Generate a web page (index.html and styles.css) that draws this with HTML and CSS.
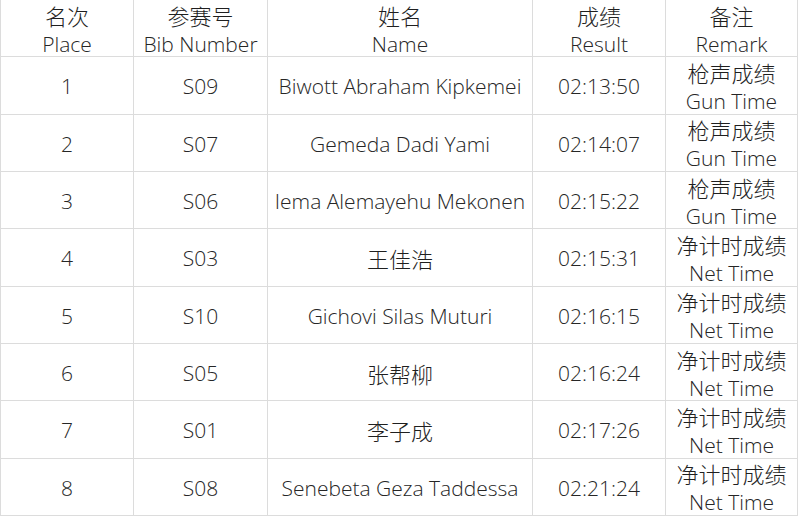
FILE: index.html
```html
<!DOCTYPE html>
<html lang="zh">
<head>
<meta charset="utf-8">
<title>成绩</title>
<link rel="stylesheet" href="styles.css">
</head>
<body>
<div class="results">
  <div class="cell"><span class="zh">名次</span><span>Place</span></div>
  <div class="cell"><span class="zh">参赛号</span><span>Bib Number</span></div>
  <div class="cell"><span class="zh">姓名</span><span>Name</span></div>
  <div class="cell"><span class="zh">成绩</span><span>Result</span></div>
  <div class="cell"><span class="zh">备注</span><span>Remark</span></div>

  <div class="cell">1</div>
  <div class="cell">S09</div>
  <div class="cell">Biwott Abraham Kipkemei</div>
  <div class="cell">02:13:50</div>
  <div class="cell"><span class="zh">枪声成绩</span><span>Gun Time</span></div>

  <div class="cell">2</div>
  <div class="cell">S07</div>
  <div class="cell">Gemeda Dadi Yami</div>
  <div class="cell">02:14:07</div>
  <div class="cell"><span class="zh">枪声成绩</span><span>Gun Time</span></div>

  <div class="cell">3</div>
  <div class="cell">S06</div>
  <div class="cell">Iema Alemayehu Mekonen</div>
  <div class="cell">02:15:22</div>
  <div class="cell"><span class="zh">枪声成绩</span><span>Gun Time</span></div>

  <div class="cell">4</div>
  <div class="cell">S03</div>
  <div class="cell"><span class="zh">王佳浩</span></div>
  <div class="cell">02:15:31</div>
  <div class="cell"><span class="zh">净计时成绩</span><span>Net Time</span></div>

  <div class="cell">5</div>
  <div class="cell">S10</div>
  <div class="cell">Gichovi Silas Muturi</div>
  <div class="cell">02:16:15</div>
  <div class="cell"><span class="zh">净计时成绩</span><span>Net Time</span></div>

  <div class="cell">6</div>
  <div class="cell">S05</div>
  <div class="cell"><span class="zh">张帮柳</span></div>
  <div class="cell">02:16:24</div>
  <div class="cell"><span class="zh">净计时成绩</span><span>Net Time</span></div>

  <div class="cell">7</div>
  <div class="cell">S01</div>
  <div class="cell"><span class="zh">李子成</span></div>
  <div class="cell">02:17:26</div>
  <div class="cell"><span class="zh">净计时成绩</span><span>Net Time</span></div>

  <div class="cell">8</div>
  <div class="cell">S08</div>
  <div class="cell">Senebeta Geza Taddessa</div>
  <div class="cell">02:21:24</div>
  <div class="cell"><span class="zh">净计时成绩</span><span>Net Time</span></div>
</div>
</body>
</html>
```
FILE: styles.css
```css
html, body {
  margin: 0;
  padding: 0;
  background: #ffffff;
}

body {
  font-family: "Open Sans", "Noto Sans CJK SC", sans-serif;
  font-size: 21px;
  font-weight: 350;
  color: #262626;
}

.results {
  display: grid;
  grid-template-columns: 133px 134px 265px 133px 132px;
  grid-template-rows: repeat(9, 57.33px);
  width: 798px;
  border-left: 1px solid #dcdcdc;
  box-sizing: border-box;
}

.cell {
  box-sizing: border-box;
  border-right: 1px solid #dcdcdc;
  border-bottom: 1px solid #dcdcdc;
  display: flex;
  flex-direction: column;
  align-items: center;
  justify-content: center;
  line-height: 29px;
  white-space: nowrap;
  padding-top: 3px;
}

.zh {
  font-family: "Noto Sans CJK SC", sans-serif;
  font-size: 22px;
  font-weight: 300;
  color: #1f1f1f;
}
```
